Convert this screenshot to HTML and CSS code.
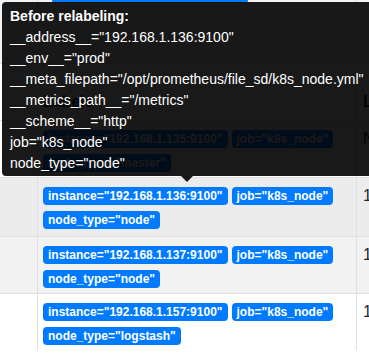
FILE: index.html
```html
<!DOCTYPE html>
<html lang="en">
<head>
    <meta charset="UTF-8">
    <meta name="viewport" content="width=device-width, initial-scale=1.0">
    <title>Targets</title>
    <link rel="stylesheet" href="styles.css">
</head>
<body>
    <div class="targets">
        <div class="row prev">
            <div class="cell state"></div>
            <div class="cell labels"><span class="stub"></span></div>
            <div class="cell scrape"></div>
        </div>
        <div class="row head">
            <div class="cell state"></div>
            <div class="cell labels">Labels</div>
            <div class="cell scrape">Last Scrape</div>
        </div>
        <div class="row">
            <div class="cell state"></div>
            <div class="cell labels">
                <span class="badge">instance="192.168.1.135:9100"</span>
                <span class="badge">job="k8s_node"</span>
                <span class="badge">node_type="master"</span>
            </div>
            <div class="cell scrape">Never</div>
        </div>
        <div class="row hover">
            <div class="cell state"></div>
            <div class="cell labels">
                <span class="badge">instance="192.168.1.136:9100"</span>
                <span class="badge">job="k8s_node"</span>
                <span class="badge">node_type="node"</span>
            </div>
            <div class="cell scrape">1.523s ago</div>
        </div>
        <div class="row striped">
            <div class="cell state"></div>
            <div class="cell labels">
                <span class="badge">instance="192.168.1.137:9100"</span>
                <span class="badge">job="k8s_node"</span>
                <span class="badge">node_type="node"</span>
            </div>
            <div class="cell scrape">1.871s ago</div>
        </div>
        <div class="row">
            <div class="cell state"></div>
            <div class="cell labels">
                <span class="badge">instance="192.168.1.157:9100"</span>
                <span class="badge">job="k8s_node"</span>
                <span class="badge">node_type="logstash"</span>
            </div>
            <div class="cell scrape">1.104s ago</div>
        </div>
    </div>

    <!-- tooltip over the hovered labels cell -->
    <div class="tooltip">
        <div class="tip-title">Before relabeling:</div>
        <div>__address__="192.168.1.136:9100"</div>
        <div>__env__="prod"</div>
        <div>__meta_filepath="/opt/prometheus/file_sd/k8s_node.yml"</div>
        <div>__metrics_path__="/metrics"</div>
        <div>__scheme__="http"</div>
        <div>job="k8s_node"</div>
        <div>node_type="node"</div>
        <span class="tip-arrow"></span>
    </div>
</body>
</html>
```

FILE: styles.css
```css
body { margin: 0; overflow: hidden; background: #fff; color: #212529; font-family: "Liberation Sans", Arial, sans-serif; font-size: 16px; }
.targets { width: 430px; }
.row { display: flex; border-top: 1px solid #dee2e6; }
.row.prev { border-top: none; height: 63px; background: #f2f2f2; }
.row.head { height: 56px; align-items: flex-end; font-weight: bold; }
.row.hover { background: #ececec; }
.row.hover .labels { padding-bottom: 7px; }
.row.striped { background: #f2f2f2; }
.cell { box-sizing: border-box; }
.state { width: 38px; flex: none; border-right: 1px solid #dee2e6; }
.labels { width: 319px; flex: none; border-right: 1px solid #dee2e6; padding: 9px 5px 5px; display: flex; flex-wrap: wrap; align-content: flex-start; column-gap: 4px; row-gap: 6px; }
.scrape { flex: 1; padding: 6px 6px 0; line-height: 24px; white-space: nowrap; }
.head .labels, .head .scrape { padding-bottom: 6px; line-height: 24px; }
.prev .labels { padding: 0 0 0 14px; }
.stub { display: block; width: 196px; height: 3px; background: #007bff; border-radius: 0 0 3px 3px; }
.badge { display: inline-block; padding: 3px 5px; font-size: 12px; font-weight: bold; line-height: 12px; color: #fff; background: #007bff; border-radius: 4px; white-space: nowrap; }
.tooltip { position: absolute; left: 2px; top: 2px; width: 384px; padding: 4px 8px 2px; background: rgba(0, 0, 0, 0.9); color: #fff; border-radius: 4px; font-size: 14px; line-height: 21px; white-space: nowrap; }
.tip-title { font-weight: bold; }
.tip-arrow { position: absolute; top: 100%; left: 179px; width: 0; height: 0; border-left: 6px solid transparent; border-right: 6px solid transparent; border-top: 6px solid rgba(0, 0, 0, 0.9); }
```
